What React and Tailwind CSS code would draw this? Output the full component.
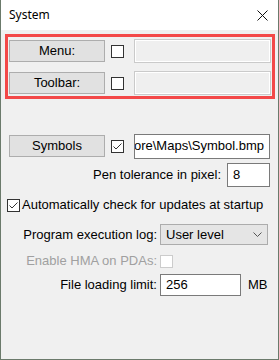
import React from "react";

const font = { fontFamily: '"Liberation Sans", Arial, sans-serif' };

function Box({ checked = false, disabled = false }) {
  return (
    <div
      className={
        "w-[13px] h-[13px] shrink-0 border bg-white flex items-center justify-center " +
        (disabled ? "border-[#cccccc]" : "border-[#333333]")
      }
    >
      {checked && (
        <svg width="11" height="11" viewBox="0 0 11 11">
          <polyline points="1.5,5.5 4,8 9.5,2.5" fill="none" stroke="#333" strokeWidth="1" />
        </svg>
      )}
    </div>
  );
}

function Btn({ children }) {
  return (
    <div className="w-[96px] h-[22px] shrink-0 bg-[#e1e1e1] border border-[#adadad] flex items-center justify-center text-[13px] text-black">
      {children}
    </div>
  );
}

function DisabledField() {
  return (
    <div className="ml-[10px] w-[137px] h-[24px] border border-[#cacaca] bg-[#efefef] shadow-[inset_0_0_0_1px_#ffffff]" />
  );
}

export default function App() {
  return (
    <div
      className="w-[279px] h-[360px] bg-[#f0f0f0] border-l border-r border-b border-[#6b7a6b] flex flex-col overflow-hidden"
      style={font}
    >
      <div className="h-[30px] bg-white flex items-center justify-between pl-[8px] pr-[10px] shrink-0">
        <span className="text-[12px] text-black" style={{ fontFamily: '"Noto Sans", "Open Sans", sans-serif' }}>
          System
        </span>
        <svg width="11" height="11" viewBox="0 0 11 11">
          <path d="M0.5 0.5 L10.5 10.5 M10.5 0.5 L0.5 10.5" stroke="#111" strokeWidth="1" />
        </svg>
      </div>

      <div className="ml-[4px] mt-[4px] w-[270px] h-[65px] border-[3px] border-[#f34848] pl-[1px] pt-[3px] flex flex-col gap-[10px]">
        <div className="flex items-center h-[22px]">
          <Btn>Menu:</Btn>
          <div className="ml-[6px]">
            <Box />
          </div>
          <DisabledField />
        </div>
        <div className="flex items-center h-[22px]">
          <Btn>Toolbar:</Btn>
          <div className="ml-[6px]">
            <Box />
          </div>
          <DisabledField />
        </div>
      </div>

      <div className="mt-[35px] pl-[8px] flex items-center h-[24px]">
        <Btn>Symbols</Btn>
        <div className="ml-[6px]">
          <Box checked />
        </div>
        <div className="ml-[10px] w-[136px] h-[25px] border border-[#7a7a7a] bg-white flex items-center justify-end pr-[5px] overflow-hidden whitespace-nowrap text-[13px] text-black">
          ore\Maps\Symbol.bmp
        </div>
      </div>

      <div className="mt-[5px] flex items-center justify-end pr-[8px] h-[24px]">
        <span className="text-[13px] text-black">Pen tolerance in pixel:</span>
        <div className="ml-[6px] w-[43px] h-[24px] border border-[#7a7a7a] bg-white flex items-center pl-[5px] text-[13px] text-black">
          8
        </div>
      </div>

      <div className="mt-[10px] pl-[6px] flex items-center h-[16px]">
        <Box checked />
        <span className="ml-[2px] text-[13px] text-black whitespace-nowrap">
          Automatically check for updates at startup
        </span>
      </div>

      <div className="mt-[11px] flex items-center h-[21px]">
        <div className="w-[156px] text-right text-[13px] text-black whitespace-nowrap">Program execution log:</div>
        <div className="ml-[3px] w-[108px] h-[21px] bg-[#e5e5e5] border border-[#acacac] flex items-center justify-between pl-[5px] pr-[5px] text-[13px] text-black">
          <span>User level</span>
          <svg width="9" height="5" viewBox="0 0 9 5">
            <polyline points="0.5,0.5 4.5,4.5 8.5,0.5" fill="none" stroke="#555" strokeWidth="1" />
          </svg>
        </div>
      </div>

      <div className="mt-[9px] flex items-center h-[14px]">
        <div className="w-[156px] text-right text-[13px] text-[#a0a0a0] whitespace-nowrap">Enable HMA on PDAs:</div>
        <div className="ml-[3px]">
          <Box disabled />
        </div>
      </div>

      <div className="mt-[6px] flex items-center h-[22px]">
        <div className="w-[156px] text-right text-[13px] text-black whitespace-nowrap">File loading limit:</div>
        <div className="ml-[3px] w-[81px] h-[22px] border border-[#7a7a7a] bg-white flex items-center pl-[5px] text-[13px] text-black">
          256
        </div>
        <span className="ml-[7px] text-[13px] text-black">MB</span>
      </div>
    </div>
  );
}
